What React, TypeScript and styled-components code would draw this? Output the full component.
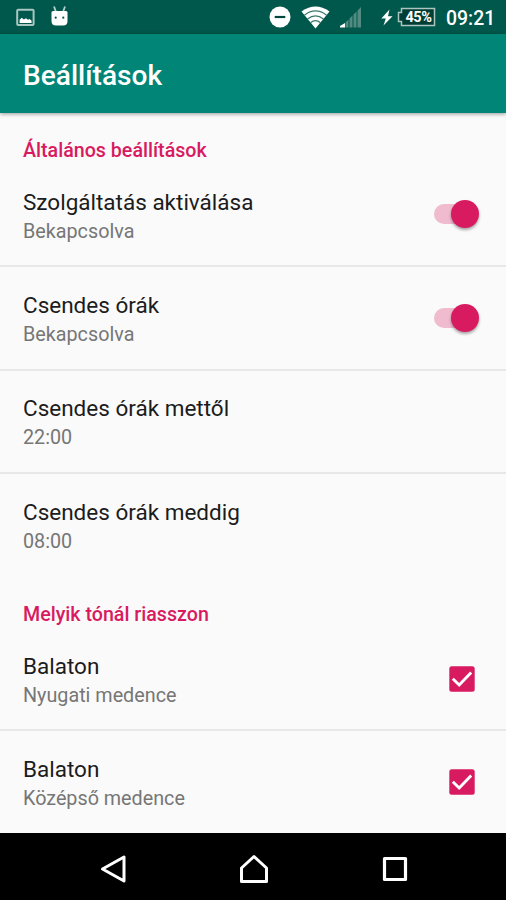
import React from 'react';
import styled, { createGlobalStyle } from 'styled-components';

const GlobalStyle = createGlobalStyle`
  * { box-sizing: border-box; }
  body { margin: 0; font-family: Roboto, "Noto Sans", sans-serif; background: #fafafa; }
`;

const Screen = styled.div`
  width: 506px;
  height: 900px;
  display: flex;
  flex-direction: column;
  overflow: hidden;
  background: #fafafa;
`;

const StatusBar = styled.header`
  flex: none;
  height: 34px;
  display: flex;
  justify-content: space-between;
  background: #00574b;
  color: #fff;
`;

const StatusGroup = styled.div`
  display: flex;
  align-items: center;
`;

const StatusIcon = styled.svg<{ $gap?: number }>`
  display: block;
  flex: none;
  margin-left: ${({ $gap = 0 }) => $gap}px;
`;

const Battery = styled.div`
  position: relative;
  width: 39px;
  height: 20px;
  margin-left: 4px;
  display: flex;
  align-items: center;
  justify-content: center;
  padding-left: 4px;
  font-size: 14.5px;
  font-weight: 700;
  letter-spacing: -0.4px;
`;

const BatteryOutline = styled.svg`
  position: absolute;
  inset: 0;
`;

const BatteryLevel = styled.span`
  position: relative;
  padding-top: 1px;
  line-height: 20px;
`;

const Clock = styled.span`
  width: 49px;
  margin: 3px 11px 0 10px;
  font-size: 19.4px;
  font-weight: 500;
  line-height: 32px;
  white-space: nowrap;
`;

const Toolbar = styled.div`
  flex: none;
  position: relative;
  height: 78.5px;
  padding: 0 24px 0 23px;
  display: flex;
  align-items: center;
  background: #008577;
  box-shadow: 0 1px 4px rgba(0, 0, 0, 0.4);
`;

const Title = styled.h1`
  margin: 5px 0 0;
  color: #fff;
  font-size: 28.1px;
  font-weight: 500;
  line-height: 34px;
`;

const Settings = styled.main`
  flex: 1;
  min-height: 0;
  overflow: hidden;
`;

const SectionTitle = styled.h2<{ $first?: boolean }>`
  height: ${({ $first }) => ($first ? 51.3 : 50.6)}px;
  margin: 0;
  padding: 25px 23px 0;
  color: #d81b60;
  font-size: 19.65px;
  font-weight: 500;
  line-height: 26px;
`;

const Row = styled.div<{ $last?: boolean }>`
  height: 103.4px;
  padding: 0 24px 0 23px;
  display: flex;
  align-items: center;
  justify-content: space-between;
  border-bottom: 2px solid ${({ $last }) => ($last ? 'transparent' : '#e8e8e8')};
`;

const RowText = styled.div`
  display: flex;
  flex-direction: column;
  padding-top: 2.4px;
`;

const RowTitle = styled.span`
  color: #1c1c1c;
  font-size: 22.5px;
  line-height: 30px;
  white-space: nowrap;
`;

const RowSummary = styled.span`
  padding-top: 1px;
  color: #767676;
  font-size: 19.75px;
  line-height: 27px;
  white-space: nowrap;
`;

const Switch = styled.span`
  width: 48px;
  height: 28px;
  margin-right: 2px;
  display: flex;
  align-items: center;
`;

const Track = styled.span`
  width: 40px;
  height: 20px;
  margin-left: 2px;
  border-radius: 10px;
  background: #f0bbce;
`;

const Thumb = styled.span`
  flex: none;
  width: 28px;
  height: 28px;
  margin-left: -23px;
  border-radius: 50%;
  background: #d81b60;
  box-shadow: 0 2px 3px rgba(0, 0, 0, 0.35);
`;

const Check = styled.svg`
  display: block;
  margin: 0 7px 0 0;
`;

const NavBar = styled.nav`
  flex: none;
  height: 67px;
  padding: 4px 0 0 2px;
  display: grid;
  grid-template-columns: 138px 144px 138px;
  justify-content: center;
  align-items: center;
  justify-items: center;
  background: #000;
`;

const CheckIcon = () => (
  <Check width="26" height="26" viewBox="0 0 26 26">
    <rect x="0.3" y="0.3" width="25.4" height="25.4" rx="2.5" fill="#d81b60" />
    <path d="M3.8 12.8 10.2 19 22.2 6.6" fill="none" stroke="#fff" strokeWidth="2.9" />
  </Check>
);

type Item = { title: string; summary: string; control?: 'switch' | 'check' };

const sections: { name: string; items: Item[] }[] = [
  {
    name: 'Általános beállítások',
    items: [
      { title: 'Szolgáltatás aktiválása', summary: 'Bekapcsolva', control: 'switch' },
      { title: 'Csendes órák', summary: 'Bekapcsolva', control: 'switch' },
      { title: 'Csendes órák mettől', summary: '22:00' },
      { title: 'Csendes órák meddig', summary: '08:00' },
    ],
  },
  {
    name: 'Melyik tónál riasszon',
    items: [
      { title: 'Balaton', summary: 'Nyugati medence', control: 'check' },
      { title: 'Balaton', summary: 'Középső medence', control: 'check' },
    ],
  },
];

export default function App() {
  return (
    <>
      <GlobalStyle />
      <Screen>
        <StatusBar>
          <StatusGroup>
            <StatusIcon $gap={16} width="19" height="19" viewBox="0 0 19 19">
              <rect x="1.2" y="1.7" width="16.4" height="15.4" rx="1" fill="none" stroke="#a9c6c1" strokeWidth="2" />
              <path d="M3.6 15v-3.2l2.2-2 2 1.6 2.2-1.2 2 1.6 1.6-.8 2 1.8V15z" fill="#fff" />
            </StatusIcon>
            <StatusIcon $gap={15} width="19" height="22" viewBox="0 0 19 22">
              <path d="M4 .5 6 6M15 .5 13 6" stroke="#b9d1cd" strokeWidth="1.8" />
              <path d="M1.5 6.5Q1.5 5 3 5h13q1.5 0 1.5 1.5V15q0 4.5-4.5 4.5h-7q-4.5 0-4.5-4.5z" fill="#fff" />
              <circle cx="5.7" cy="11.7" r="1.1" fill="#00574b" />
              <circle cx="13.3" cy="11.7" r="1.1" fill="#00574b" />
            </StatusIcon>
          </StatusGroup>
          <StatusGroup>
            <StatusIcon width="22" height="22" viewBox="0 0 22 22">
              <circle cx="11" cy="11" r="10.5" fill="#fff" />
              <path d="M5.7 11h10.6" stroke="#00473d" strokeWidth="2.2" />
            </StatusIcon>
            <StatusIcon $gap={10} width="29" height="24" viewBox="0 0 29 24">
              <path d="M.5 6.5Q14.5-3.5 28.5 6.5L14.5 23.5z" fill="#fff" />
              <g fill="none" stroke="#38796f" strokeWidth="1.2">
                <path d="M3.4 10.2q11.1-8.6 22.2 0" />
                <path d="M6.5 14q8-6.4 16 0" />
                <path d="M9.5 17.8q5-4.2 10 0" />
              </g>
            </StatusIcon>
            <StatusIcon $gap={10} width="22" height="22" viewBox="0 0 22 22">
              <path d="M0 21.5V20l5-3v4.5z" fill="#fff" />
              <path d="M5.5 21.5v-5l3-3v8zM9.5 21.5v-9l3-3v12zM13.5 21.5v-13l3-3v16zM17.5 21.5v-17L21 1v20.5z" fill="#518b82" />
            </StatusIcon>
            <StatusIcon $gap={18} width="13" height="17" viewBox="0 0 13 17">
              <path d="M9.5 .5 1.3 9.5h4.5L3.5 16.5 12.5 7.3H8z" fill="#fff" />
            </StatusIcon>
            <Battery>
              <BatteryOutline width="39" height="20" viewBox="0 0 39 20">
                <path d="M4.5 1.5h33v17h-33v-4H1.5v-9h3z" fill="#003e35" stroke="#a9c6c1" strokeWidth="1.5" />
              </BatteryOutline>
              <BatteryLevel>45%</BatteryLevel>
            </Battery>
            <Clock>09:21</Clock>
          </StatusGroup>
        </StatusBar>
        <Toolbar>
          <Title>Beállítások</Title>
        </Toolbar>
        <Settings>
          {sections.map((section, s) => (
            <section key={section.name}>
              <SectionTitle $first={s === 0}>{section.name}</SectionTitle>
              {section.items.map((item, i) => (
                <Row key={item.title + item.summary} $last={i === section.items.length - 1}>
                  <RowText>
                    <RowTitle>{item.title}</RowTitle>
                    <RowSummary>{item.summary}</RowSummary>
                  </RowText>
                  {item.control === 'switch' && (
                    <Switch role="switch" aria-checked="true">
                      <Track />
                      <Thumb />
                    </Switch>
                  )}
                  {item.control === 'check' && <CheckIcon />}
                </Row>
              ))}
            </section>
          ))}
        </Settings>
        <NavBar>
          <svg width="28" height="30" viewBox="0 0 28 30">
            <path d="M3.5 15 25 3v24z" fill="none" stroke="#fff" strokeWidth="3" strokeLinejoin="round" />
          </svg>
          <svg width="30" height="30" viewBox="0 0 30 30">
            <path d="M15 2.5 27.5 14v13.5h-25V14z" fill="none" stroke="#fff" strokeWidth="3" strokeLinejoin="round" />
          </svg>
          <svg width="26" height="26" viewBox="0 0 26 26">
            <rect x="2.5" y="2.5" width="21" height="21" fill="none" stroke="#fff" strokeWidth="3.2" strokeLinejoin="round" />
          </svg>
        </NavBar>
      </Screen>
    </>
  );
}
